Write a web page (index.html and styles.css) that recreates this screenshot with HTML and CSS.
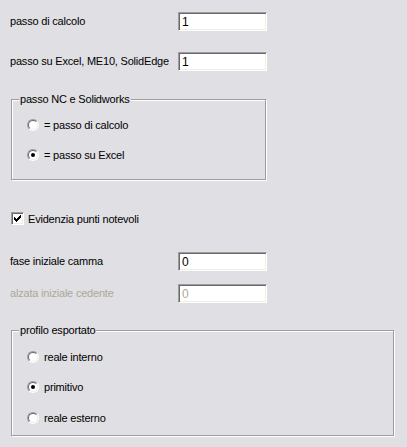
FILE: index.html
```html
<!DOCTYPE html>
<html>
<head>
<meta charset="utf-8">
<link rel="stylesheet" href="styles.css">
</head>
<body>
<div class="page">
  <div class="row row-1">
    <span class="lbl">passo di calcolo</span>
    <input class="field" type="text" value="1">
  </div>
  <div class="row row-2">
    <span class="lbl">passo su Excel, ME10, SolidEdge</span>
    <input class="field" type="text" value="1">
  </div>

  <div class="group group-nc">
    <span class="gtitle">passo NC e Solidworks</span>
    <div class="opt opt-first"><span class="radio"></span><span>= passo di calcolo</span></div>
    <div class="opt"><span class="radio checked"></span><span>= passo su Excel</span></div>
  </div>

  <div class="check-row">
    <span class="check">
      <svg width="7" height="7" viewBox="0 0 7 7"><path d="M0 2h1v1h1v1h1v-1h1v-1h1v-1h1v-1h1v3h-1v1h-1v1h-1v1h-1v1h-1v-1h-1v-1h-1v-1h-1z" fill="#000"/></svg>
    </span>
    <span>Evidenzia punti notevoli</span>
  </div>

  <div class="row row-3">
    <span class="lbl">fase iniziale camma</span>
    <input class="field" type="text" value="0">
  </div>
  <div class="row row-4 disabled">
    <span class="lbl">alzata iniziale cedente</span>
    <input class="field" type="text" value="0" disabled>
  </div>

  <div class="group group-prof">
    <span class="gtitle">profilo esportato</span>
    <div class="opt opt-first"><span class="radio"></span><span>reale interno</span></div>
    <div class="opt"><span class="radio checked"></span><span>primitivo</span></div>
    <div class="opt opt-last"><span class="radio"></span><span>reale esterno</span></div>
  </div>
</div>
</body>
</html>
```

FILE: styles.css
```css
html, body {
  margin: 0;
  padding: 0;
  background: #e0dfe3;
}
body {
  width: 407px;
  height: 447px;
  overflow: hidden;
  font-family: "Liberation Sans", Arial, sans-serif;
  font-size: 11px;
  letter-spacing: -0.2px;
  color: #000;
}
.page {
  display: flex;
  flex-direction: column;
  align-items: flex-start;
  padding: 12px 0 0 10px;
}
.row {
  display: grid;
  grid-template-columns: 168px 89px;
  align-items: center;
  height: 19px;
}
.row-2 { margin-top: 21px; }
.row-3 { margin-top: 27px; }
.row-4 { margin-top: 13px; }
.lbl { line-height: 13px; white-space: nowrap; }
.disabled .lbl { color: #aca899; }

.field {
  box-sizing: border-box;
  width: 89px;
  height: 19px;
  margin: 0;
  padding: 0 0 0 3px;
  border: 1px solid;
  border-color: #9d9da1 #fff #fff #9d9da1;
  box-shadow: inset 1px 1px 0 #696969, inset -1px -1px 0 #f1efe2;
  background: #fff;
  font-family: "Liberation Sans", Arial, sans-serif;
  font-size: 12px;
  color: #000;
  outline: none;
}
.field:disabled {
  background: #fff;
  color: #aca899;
  -webkit-text-fill-color: #aca899;
  opacity: 1;
}

.group {
  box-sizing: border-box;
  margin-left: 1px;
  display: flex;
  flex-direction: column;
  align-items: flex-start;
  border: 1px solid #9d9da1;
  box-shadow: 1px 1px 0 #fff, inset 1px 1px 0 #fff;
}
.group-nc {
  width: 255px;
  margin-top: 28px;
  padding-bottom: 16px;
}
.group-prof {
  width: 383px;
  margin-top: 27px;
  padding-bottom: 9px;
}
.gtitle {
  margin-top: -7px;
  margin-left: 7px;
  padding: 0 1px;
  line-height: 13px;
  background: #e0dfe3;
  white-space: nowrap;
}
.opt {
  display: flex;
  align-items: center;
  gap: 5px;
  height: 16px;
  margin-left: 15px;
  margin-top: 14px;
}
.group-nc .opt-first { margin-top: 11px; }
.group-prof .opt-first { margin-top: 12px; }
.group-prof .opt-last { margin-top: 15px; }

.radio {
  box-sizing: border-box;
  width: 12px;
  height: 12px;
  border-radius: 50%;
  border: 1px solid;
  border-color: #9d9da1 #fff #fff #9d9da1;
  display: flex;
  align-items: center;
  justify-content: center;
  flex: none;
}
.radio::before {
  content: "";
  box-sizing: border-box;
  width: 10px;
  height: 10px;
  border-radius: 50%;
  border: 1px solid;
  border-color: #696969 #f1efe2 #f1efe2 #696969;
  background: #fff;
}
.radio.checked::after {
  content: "";
  position: absolute;
  width: 4px;
  height: 4px;
  border-radius: 50%;
  background: #000;
}
.radio.checked { position: relative; }

.check-row {
  display: flex;
  align-items: center;
  gap: 4px;
  height: 13px;
  margin-top: 32px;
  margin-left: 1px;
}
.check {
  box-sizing: border-box;
  width: 13px;
  height: 13px;
  border: 1px solid;
  border-color: #9d9da1 #fff #fff #9d9da1;
  box-shadow: inset 1px 1px 0 #696969, inset -1px -1px 0 #f1efe2;
  background: #fff;
  display: flex;
  align-items: center;
  justify-content: center;
  flex: none;
}
.check svg { display: block; }
```
